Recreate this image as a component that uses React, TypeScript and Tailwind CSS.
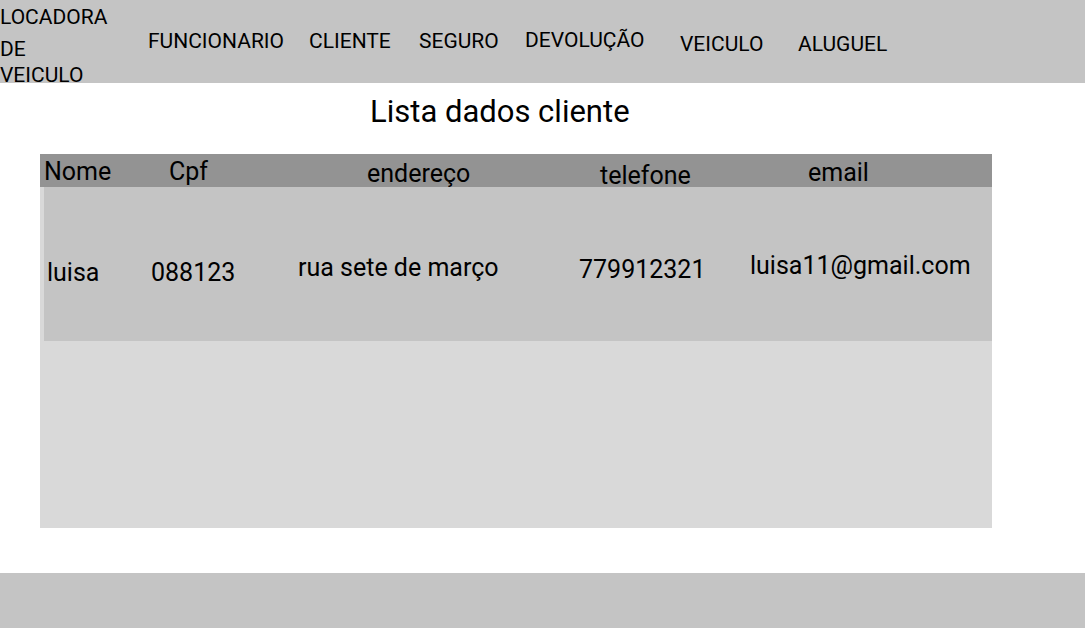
import React from 'react';

const navItems = [
  { label: 'FUNCIONARIO', w: 'w-[161px]', pt: 'pt-[31px]' },
  { label: 'CLIENTE', w: 'w-[110px]', pt: 'pt-[31px]' },
  { label: 'SEGURO', w: 'w-[106px]', pt: 'pt-[31px]' },
  { label: 'DEVOLUÇÃO', w: 'w-[155px]', pt: 'pt-[30px]' },
  { label: 'VEICULO', w: 'w-[118px]', pt: 'pt-[34px]' },
  { label: 'ALUGUEL', w: 'w-auto', pt: 'pt-[34px]' },
];

const headCols = [
  { label: 'Nome', w: 'w-[125px]', pt: 'pt-[1px]' },
  { label: 'Cpf', w: 'w-[198px]', pt: 'pt-[1px]' },
  { label: 'endereço', w: 'w-[233px]', pt: 'pt-[3px]' },
  { label: 'telefone', w: 'w-[208px]', pt: 'pt-[5px]' },
  { label: 'email', w: 'w-auto', pt: 'pt-[2px]' },
];

const rowCols = [
  { value: 'luisa', w: 'w-[104px]', pt: 'pt-[72px]' },
  { value: '088123', w: 'w-[147px]', pt: 'pt-[72px]' },
  { value: 'rua sete de março', w: 'w-[281px]', pt: 'pt-[67px]' },
  { value: '779912321', w: 'w-[171px]', pt: 'pt-[69px]' },
  { value: 'luisa11@gmail.com', w: 'w-auto', pt: 'pt-[65px]' },
];

export default function App() {
  return (
    <div className="w-[1086px] h-[628px] bg-white text-black font-['Roboto',sans-serif] flex flex-col">
      {/* Top bar */}
      <header className="w-[1085px] h-[83px] shrink-0 bg-[#c4c4c4] flex overflow-hidden text-[21px] leading-[20px]">
        <div className="w-[148px] shrink-0 pt-[7px]">
          <div>LOCADORA</div>
          <div className="mt-[12px]">DE</div>
          <div className="mt-[6px]">VEICULO</div>
        </div>
        {navItems.map(item => (
          <div key={item.label} className={`${item.w} ${item.pt} shrink-0`}>
            {item.label}
          </div>
        ))}
      </header>

      <h1 className="mt-[11px] pl-[370px] text-[31px] leading-[35px] font-normal">
        Lista dados cliente
      </h1>

      {/* Table */}
      <div className="mt-[25px] ml-[40px] w-[952px] bg-[#d9d9d9] text-[25px]">
        <div className="h-[33px] bg-[#939393] flex pl-[4px] leading-[33px]">
          {headCols.map(col => (
            <div key={col.label} className={`${col.w} ${col.pt} shrink-0`}>
              {col.label}
            </div>
          ))}
        </div>
        <div className="ml-[4px] h-[154px] bg-[#c4c4c4] flex pl-[3px] leading-[28px]">
          {rowCols.map(col => (
            <div key={col.value} className={`${col.w} ${col.pt} shrink-0`}>
              {col.value}
            </div>
          ))}
        </div>
        <div className="h-[187px]" />
      </div>

      {/* Footer */}
      <footer className="mt-auto w-[1085px] h-[55px] bg-[#c4c4c4]" />
    </div>
  );
}
